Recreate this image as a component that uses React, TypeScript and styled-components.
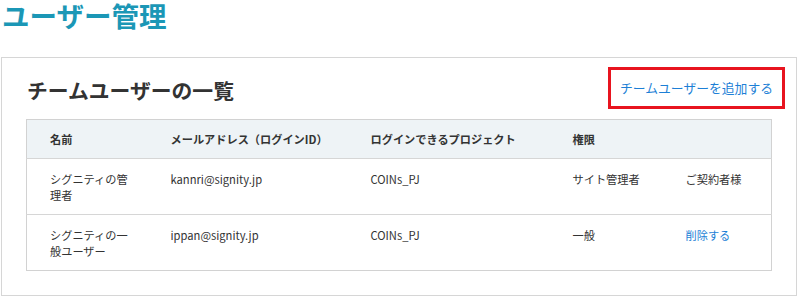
import React from 'react';
import styled, { createGlobalStyle } from 'styled-components';

const GlobalStyle = createGlobalStyle`
    body {
        margin: 0;
        background: #fff;
        font-family: "Noto Sans CJK JP", "Noto Sans", sans-serif;
        color: #333;
    }
`;

const Page = styled.div`
    padding: 0 3px 0 1px;
`;

const PageTitle = styled.h1`
    margin: 0 0 26px 1px;
    font-size: 27.5px;
    line-height: 31px;
    font-weight: 700;
    color: #1b97b6;
`;

const Card = styled.section`
    border: 1px solid #d6d6d6;
    padding: 17px 23px 24px 25px;
`;

const CardHeader = styled.div`
    display: flex;
    justify-content: space-between;
    align-items: center;
    margin-bottom: 14px;
`;

const CardTitle = styled.h2`
    margin: 0;
    font-size: 20.8px;
    line-height: 30px;
    font-weight: 700;
    color: #333;
`;

const AddLink = styled.a`
    display: inline-block;
    font-size: 12.8px;
    line-height: 18px;
    color: #1d7fd6;
    text-decoration: none;
    outline: 3px solid #e8141f;
    outline-offset: 9px;
    margin: 0 0 4px 0;
    cursor: pointer;
`;

const Table = styled.table`
    width: 100%;
    border-collapse: collapse;
    table-layout: fixed;
    border: 1px solid #d2d2d2;
    margin-left: -1px;
    font-size: 11.2px;
    line-height: 16px;
`;

const HeadRow = styled.tr`
    background: #eef3f6;
`;

const Th = styled.th`
    text-align: left;
    font-weight: 700;
    padding: 11px 12px 11px 23px;
    color: #333;
`;

const Row = styled.tr`
    border-top: 1px solid #d6d6d6;
`;

const Td = styled.td<{ $link?: boolean }>`
    vertical-align: top;
    padding: 12px 12px 11px 23px;
    height: 32px;
    color: ${p => (p.$link ? '#1d7fd6' : '#333')};
    cursor: ${p => (p.$link ? 'pointer' : 'auto')};
`;

interface IUser {
    name: string;
    email: string;
    project: string;
    role: string;
    action: string;
    actionLink: boolean;
}

const users: IUser[] = [
    { name: 'シグニティの管理者', email: 'kannri@signity.jp', project: 'COINs_PJ', role: 'サイト管理者', action: 'ご契約者様', actionLink: false },
    { name: 'シグニティの一般ユーザー', email: 'ippan@signity.jp', project: 'COINs_PJ', role: '一般', action: '削除する', actionLink: true },
];

export default function App() {
    return (
        <Page>
            <GlobalStyle />
            <PageTitle>ユーザー管理</PageTitle>
            <Card>
                <CardHeader>
                    <CardTitle>チームユーザーの一覧</CardTitle>
                    <AddLink>チームユーザーを追加する</AddLink>
                </CardHeader>
                <Table>
                    <colgroup>
                        <col style={{ width: 121 }} />
                        <col style={{ width: 200 }} />
                        <col style={{ width: 202 }} />
                        <col style={{ width: 113 }} />
                        <col />
                    </colgroup>
                    <thead>
                        <HeadRow>
                            <Th>名前</Th>
                            <Th>メールアドレス（ログインID）</Th>
                            <Th>ログインできるプロジェクト</Th>
                            <Th>権限</Th>
                            <Th></Th>
                        </HeadRow>
                    </thead>
                    <tbody>
                        {users.map(u => (
                            <Row key={u.email}>
                                <Td>{u.name}</Td>
                                <Td>{u.email}</Td>
                                <Td>{u.project}</Td>
                                <Td>{u.role}</Td>
                                <Td $link={u.actionLink}>{u.action}</Td>
                            </Row>
                        ))}
                    </tbody>
                </Table>
            </Card>
        </Page>
    );
}
